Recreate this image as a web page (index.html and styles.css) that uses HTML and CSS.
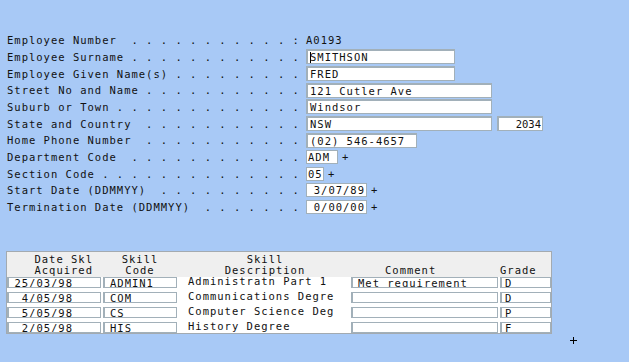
FILE: index.html
```html
<!DOCTYPE html>
<html lang="en">
  <head>
    <meta charset="UTF-8" />
    <meta name="viewport" content="width=device-width, initial-scale=1.0" />
    <title>Employee Details</title>
    <link rel="stylesheet" href="styles.css">
  </head>
  <body>
    <main class="screen">
      <section class="form">
        <div class="form-row">
          <span class="label">Employee Number  . . . . . . . . . . . :</span>
          <span class="value">A0193</span>
        </div>
        <div class="form-row">
          <span class="label">Employee Surname . . . . . . . . . . . .</span>
          <span class="field w-name"><i class="caret"></i>SMITHSON</span>
        </div>
        <div class="form-row">
          <span class="label">Employee Given Name(s) . . . . . . . . .</span>
          <span class="field w-name">FRED</span>
        </div>
        <div class="form-row">
          <span class="label">Street No and Name . . . . . . . . . . .</span>
          <span class="field w-addr">121 Cutler Ave</span>
        </div>
        <div class="form-row">
          <span class="label">Suburb or Town . . . . . . . . . . . . .</span>
          <span class="field w-addr">Windsor</span>
        </div>
        <div class="form-row">
          <span class="label">State and Country  . . . . . . . . . . .</span>
          <span class="field w-addr">NSW</span>
          <span class="field w-post">2034</span>
        </div>
        <div class="form-row">
          <span class="label">Home Phone Number  . . . . . . . . . . .</span>
          <span class="field w-phone">(02) 546-4657</span>
        </div>
        <div class="form-row">
          <span class="label">Department Code  . . . . . . . . . . . .</span>
          <span class="field small w-dept">ADM</span>
          <span class="lookup">+</span>
        </div>
        <div class="form-row">
          <span class="label">Section Code . . . . . . . . . . . . . .</span>
          <span class="field small w-sect">05</span>
          <span class="lookup">+</span>
        </div>
        <div class="form-row">
          <span class="label">Start Date (DDMMYY)  . . . . . . . . . .</span>
          <span class="field small w-date">3/07/89</span>
          <span class="lookup">+</span>
        </div>
        <div class="form-row">
          <span class="label">Termination Date (DDMMYY)  . . . . . . .</span>
          <span class="field small w-date">0/00/00</span>
          <span class="lookup">+</span>
        </div>
      </section>

      <section class="skills">
        <div class="skills-head">
          <div class="head-date">Date Skl<br>Acquired</div>
          <div class="head-code">Skill<br>Code</div>
          <div class="head-desc">Skill<br>Description</div>
          <div class="head-comment">Comment</div>
          <div class="head-grade">Grade</div>
        </div>
        <div class="skills-row">
          <span class="box cell-date">25/03/98</span>
          <span class="box cell-code">ADMIN1</span>
          <span class="cell-desc">Administratn Part 1</span>
          <span class="box cell-comment">Met requirement</span>
          <span class="box cell-grade">D</span>
        </div>
        <div class="skills-row">
          <span class="box cell-date">4/05/98</span>
          <span class="box cell-code">COM</span>
          <span class="cell-desc">Communications Degre</span>
          <span class="box cell-comment"></span>
          <span class="box cell-grade">D</span>
        </div>
        <div class="skills-row">
          <span class="box cell-date">5/05/98</span>
          <span class="box cell-code">CS</span>
          <span class="cell-desc">Computer Science Deg</span>
          <span class="box cell-comment"></span>
          <span class="box cell-grade">P</span>
        </div>
        <div class="skills-row">
          <span class="box cell-date">2/05/98</span>
          <span class="box cell-code">HIS</span>
          <span class="cell-desc">History Degree</span>
          <span class="box cell-comment"></span>
          <span class="box cell-grade">F</span>
        </div>
      </section>
    </main>

    <!-- mouse cursor left on the screen -->
    <svg class="cursor" width="7" height="7" viewBox="0 0 7 7">
      <path d="M3.5 0 V7 M0 3.5 H7" stroke="#000" stroke-width="1" />
    </svg>
  </body>
</html>
```

FILE: styles.css
```css
:root {
  --bg-color: #a8c9f6;
  --text-color: #111;
  --field-border: #a2b0b9;
  --table-border: #a3aab0;
  --head-bg: #efefef;
}
html,
body {
  margin: 0;
  padding: 0;
  width: 100vw;
  height: 100vh;
  background: var(--bg-color);
}
body {
  position: relative;
  overflow: hidden;
  color: var(--text-color);
  font-family: "DejaVu Sans Mono", "Liberation Mono", monospace;
  font-size: 10.5px;
  letter-spacing: 1px;
}

.screen {
  padding: 32px 0 0 6px;
}

/* Employee form */
.form {
  display: flex;
  flex-direction: column;
}
.form-row {
  display: flex;
  align-items: center;
  height: 16.67px;
}
.label {
  flex: none;
  width: 300px;
  padding-left: 1px;
  box-sizing: border-box;
  white-space: pre;
}
.field {
  box-sizing: border-box;
  height: 15px;
  padding: 0 2px;
  background: #fff;
  border: 1px solid var(--field-border);
  border-width: 2px 1px 1px 2px;
  line-height: 12px;
  white-space: pre;
  overflow: hidden;
}
.field.small {
  height: 14px;
  padding: 0 1px;
  border-width: 1px;
}
.caret {
  display: inline-block;
  width: 0;
  height: 11px;
  margin-right: -1px;
  border-left: 1px solid #000;
  vertical-align: -2px;
}
.w-name {
  width: 149px;
}
.w-addr {
  width: 186px;
}
.w-post {
  width: 46px;
  margin-left: 5px;
  text-align: right;
  padding-right: 1px;
  letter-spacing: 0;
}
.w-phone {
  width: 111px;
}
.w-dept {
  width: 32px;
}
.w-sect {
  width: 18px;
}
.w-date {
  width: 61px;
  text-align: right;
  padding-right: 0;
}
.lookup {
  margin-left: 4px;
}

/* Skills table */
.skills {
  width: 546px;
  margin-top: 36px;
  box-sizing: border-box;
  border: 1px solid var(--table-border);
  background: #fff;
}
.skills-head,
.skills-row {
  display: grid;
  grid-template-columns: 94px 76px 174px 147px 53px;
}
.skills-head {
  height: 25px;
  box-sizing: border-box;
  padding-top: 2px;
  background: var(--head-bg);
  line-height: 11px;
}
.head-date {
  text-align: right;
  padding-right: 8px;
}
.head-code,
.head-desc {
  text-align: center;
  padding-left: 2px;
}
.head-comment {
  padding: 11px 0 0 34px;
}
.head-grade {
  padding: 11px 0 0 2px;
}

.skills-row {
  height: 11px;
  margin-bottom: 4px;
}
.skills-row:last-child {
  margin-bottom: 0;
}
.box {
  box-sizing: border-box;
  height: 11px;
  background: #fff;
  border: 1px solid var(--field-border);
  border-left-width: 2px;
  line-height: 10px;
  white-space: pre;
  overflow: hidden;
}
.cell-date {
  text-align: right;
  padding-right: 27px;
}
.cell-code {
  margin-left: 2px;
  padding-left: 5px;
}
.cell-desc {
  padding-left: 11px;
  line-height: 8px;
  white-space: pre;
}
.cell-comment {
  padding-left: 5px;
}
.cell-grade {
  margin-left: 2px;
  padding-left: 3px;
}

.cursor {
  position: absolute;
  left: 570px;
  top: 337px;
}
```
